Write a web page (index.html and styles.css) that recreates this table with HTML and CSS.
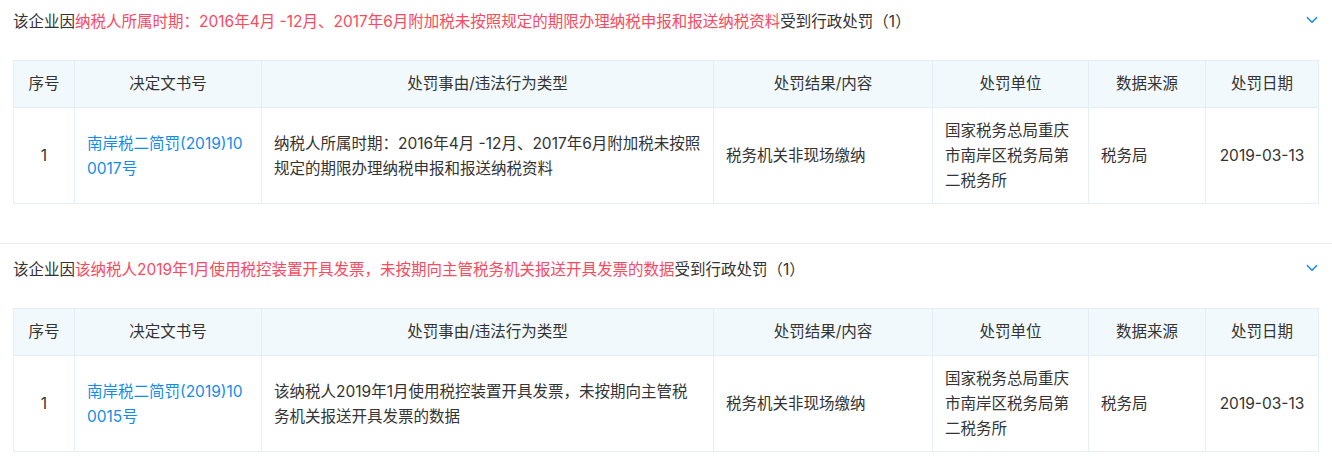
FILE: index.html
```html
<!DOCTYPE html>
<html lang="zh-CN">
<head>
<meta charset="utf-8">
<title>行政处罚</title>
<link rel="stylesheet" href="styles.css">
</head>
<body>
<div class="page">
  <section class="case">
    <div class="case-head">
      <p class="case-title">该企业因<span class="hl">纳税人所属时期：2016年4月 -12月、2017年6月附加税未按照规定的期限办理纳税申报和报送纳税资料</span>受到行政处罚（1）</p>
      <svg class="chev" width="12" height="8" viewBox="0 0 12 8"><polyline points="1,1.2 6,6.2 11,1.2" fill="none" stroke="#128bed" stroke-width="1.5"/></svg>
    </div>
    <table class="grid">
      <colgroup>
        <col class="c-no"><col class="c-doc"><col class="c-reason"><col class="c-result"><col class="c-org"><col class="c-src"><col class="c-date">
      </colgroup>
      <thead>
        <tr><th>序号</th><th>决定文书号</th><th>处罚事由/违法行为类型</th><th>处罚结果/内容</th><th>处罚单位</th><th>数据来源</th><th>处罚日期</th></tr>
      </thead>
      <tbody>
        <tr>
          <td class="center">1</td>
          <td class="doc"><a class="link" href="#">南岸税二简罚(2019)100017号</a></td>
          <td>纳税人所属时期：2016年4月 -12月、2017年6月附加税未按照规定的期限办理纳税申报和报送纳税资料</td>
          <td>税务机关非现场缴纳</td>
          <td>国家税务总局重庆市南岸区税务局第二税务所</td>
          <td>税务局</td>
          <td class="center">2019-03-13</td>
        </tr>
      </tbody>
    </table>
  </section>
  <section class="case">
    <div class="case-head">
      <p class="case-title">该企业因<span class="hl">该纳税人2019年1月使用税控装置开具发票，未按期向主管税务机关报送开具发票的数据</span>受到行政处罚（1）</p>
      <svg class="chev" width="12" height="8" viewBox="0 0 12 8"><polyline points="1,1.2 6,6.2 11,1.2" fill="none" stroke="#128bed" stroke-width="1.5"/></svg>
    </div>
    <table class="grid">
      <colgroup>
        <col class="c-no"><col class="c-doc"><col class="c-reason"><col class="c-result"><col class="c-org"><col class="c-src"><col class="c-date">
      </colgroup>
      <thead>
        <tr><th>序号</th><th>决定文书号</th><th>处罚事由/违法行为类型</th><th>处罚结果/内容</th><th>处罚单位</th><th>数据来源</th><th>处罚日期</th></tr>
      </thead>
      <tbody>
        <tr>
          <td class="center">1</td>
          <td class="doc"><a class="link" href="#">南岸税二简罚(2019)100015号</a></td>
          <td>该纳税人2019年1月使用税控装置开具发票，未按期向主管税务机关报送开具发票的数据</td>
          <td>税务机关非现场缴纳</td>
          <td>国家税务总局重庆市南岸区税务局第二税务所</td>
          <td>税务局</td>
          <td class="center">2019-03-13</td>
        </tr>
      </tbody>
    </table>
  </section>
</div>
</body>
</html>
```

FILE: styles.css
```css
html, body {
  margin: 0;
  padding: 0;
  background: #fff;
}
body {
  font-family: "Inter", "Noto Sans CJK SC", sans-serif;
  font-size: 15.5px;
  color: #333;
  text-spacing-trim: space-all;
}
.page {
  display: flex;
  flex-direction: column;
}
.case {
  padding: 11px 14px 39px 13px;
}
.case + .case {
  border-top: 1px solid #eeeeee;
  padding-top: 15px;
}
.case-head {
  display: flex;
  align-items: center;
  justify-content: space-between;
  margin-bottom: 27px;
}
.case-title {
  margin: 0;
  line-height: 22px;
  color: #333;
  white-space: nowrap;
}
.hl {
  color: #fd485e;
}
.chev {
  display: block;
  margin-top: -4px;
}
.grid {
  width: 100%;
  table-layout: fixed;
  border-collapse: collapse;
}
.c-no { width: 61px; }
.c-doc { width: 187px; }
.c-reason { width: 452px; }
.c-result { width: 219px; }
.c-org { width: 156px; }
.c-src { width: 117px; }
.c-date { width: 113px; }
.grid th,
.grid td {
  border: 1px solid #e4eef6;
}
.grid th {
  background: #f2f9fc;
  font-weight: normal;
  padding: 12px 6px;
  line-height: 22px;
  text-align: center;
  color: #333;
}
.grid td {
  padding: 10px 12px;
  line-height: 25px;
  text-align: left;
  vertical-align: middle;
  word-break: break-all;
  color: #333;
}
.grid td.center {
  text-align: center;
}
.grid td.doc {
  padding-right: 16px;
}
.link {
  color: #128bed;
  text-decoration: none;
}
```
